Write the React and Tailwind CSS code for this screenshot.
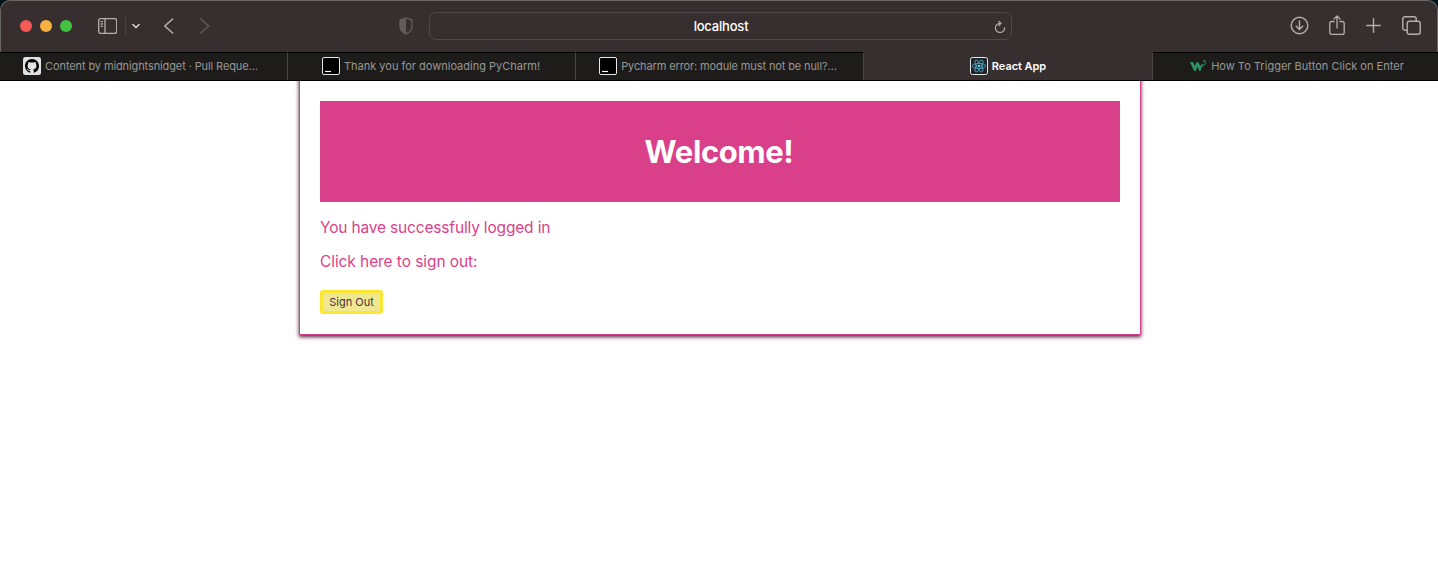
import React from "react";

function GithubIcon() {
  return (
    <svg className="size-[18px] shrink-0" viewBox="0 0 18 18">
      <rect width="18" height="18" rx="2.5" fill="#e2e2e2" />
      <g transform="translate(2 2) scale(0.875)">
        <path
          fill="#000"
          fillRule="evenodd"
          d="M8 0C3.58 0 0 3.58 0 8c0 3.54 2.29 6.53 5.47 7.59.4.07.55-.17.55-.38 0-.19-.01-.82-.01-1.49-2.01.37-2.53-.49-2.69-.94-.09-.23-.48-.94-.82-1.13-.28-.15-.68-.52-.01-.53.63-.01 1.08.58 1.23.82.72 1.21 1.87.87 2.33.66.07-.52.28-.87.51-1.07-1.78-.2-3.64-.89-3.64-3.95 0-.87.31-1.59.82-2.15-.08-.2-.36-1.02.08-2.12 0 0 .67-.21 2.2.82.64-.18 1.32-.27 2-.27s1.36.09 2 .27c1.53-1.04 2.2-.82 2.2-.82.44 1.1.16 1.92.08 2.12.51.56.82 1.27.82 2.15 0 3.07-1.87 3.75-3.65 3.95.29.25.54.73.54 1.48 0 1.07-.01 1.93-.01 2.2 0 .21.15.46.55.38A8.01 8.01 0 0 0 16 8c0-4.42-3.58-8-8-8z"
        />
      </g>
    </svg>
  );
}

function JetBrainsIcon() {
  return (
    <svg className="size-[18px] shrink-0" viewBox="0 0 18 18">
      <rect x="0.5" y="0.5" width="17" height="17" rx="1.5" fill="#000" stroke="#e8e8e8" />
      <path d="M3 14.5h6" stroke="#fff" strokeWidth="1.2" />
    </svg>
  );
}

function ReactIcon() {
  return (
    <svg className="size-[18px] shrink-0" viewBox="0 0 18 18">
      <rect x="0.5" y="0.5" width="17" height="17" rx="2" fill="#20232a" stroke="#e8e8e8" />
      <g fill="none" stroke="#4fa9c4" strokeWidth="0.85">
        <ellipse cx="9" cy="9" rx="6.7" ry="2.6" />
        <ellipse cx="9" cy="9" rx="6.7" ry="2.6" transform="rotate(60 9 9)" />
        <ellipse cx="9" cy="9" rx="6.7" ry="2.6" transform="rotate(120 9 9)" />
      </g>
      <circle cx="9" cy="9" r="1.3" fill="#61dafb" />
    </svg>
  );
}

function W3Icon() {
  return (
    <svg className="h-[18px] w-[17px] shrink-0" viewBox="0 0 17 18">
      <path
        fill="#2c9469"
        d="M0 5h3l1.900 4.300L6.600 5.300h1.800l1.900 4 .9-1.700c.6-.7 1.600-.3 2.100.6l.3 1.800c-.7-.8-1.500-.9-1.900 0L10.500 14H9.300L7.500 9.600 5.600 14H4.200z"
      />
      <path
        d="M13 3.700h2.400l-1.100 1.500c1.700 0 1.600 2.400 0 2.400-.7 0-1-.2-1.200-.7"
        fill="none"
        stroke="#2c9469"
        strokeWidth="0.9"
      />
    </svg>
  );
}

const tabs = [
  { label: "Content by midnightsnidget · Pull Reque…", Icon: GithubIcon, spacing: "tracking-[-0.11px]", box: "w-[288px] pr-1.5" },
  { label: "Thank you for downloading PyCharm!", Icon: JetBrainsIcon, spacing: "tracking-[0px]", box: "w-[288px] pr-px" },
  { label: "Pycharm error: module must not be null?…", Icon: JetBrainsIcon, spacing: "tracking-[-0.12px]", box: "w-[288px] pr-[3px]" },
  { label: "React App", Icon: ReactIcon, active: true, spacing: "tracking-[-0.05px]", box: "w-[289px]" },
  { label: "How To Trigger Button Click on Enter", Icon: W3Icon, spacing: "tracking-[0.02px]", box: "w-[285px] pl-[3px]" },
];

function Tab({ label, Icon, active, spacing, box }) {
  return (
    <div
      className={`${box} flex shrink-0 items-center justify-center gap-1 border-t pb-px text-[11px] whitespace-nowrap ${
        active
          ? "border-t-[#372f2f] bg-[#372f2f] font-semibold text-white"
          : "border-t-black bg-[#1d1c1a] text-[#999795]"
      }`}
    >
      <Icon />
      <span className={spacing}>{label}</span>
    </div>
  );
}

function Toolbar() {
  return (
    <div className="flex h-[52px] items-center rounded-t-[10px] border-x border-t border-[#6b6666] bg-[#372f2f] pb-px pl-[19px] text-[#b4afaf]">
      <div className="flex gap-2">
        <span className="size-3 rounded-full bg-[#f35b57]" />
        <span className="size-3 rounded-full bg-[#f6b23e]" />
        <span className="size-3 rounded-full bg-[#44c143]" />
      </div>
      <svg className="ml-[26px] h-4 w-[19px]" viewBox="0 0 19 16" fill="none" stroke="currentColor" strokeWidth="1.3">
        <rect x="0.7" y="0.7" width="18" height="14.6" rx="2" />
        <path d="M7 .7v14.6M2.7 3.7h2.2M2.7 6h2.2M2.7 8.3h2.2" />
      </svg>
      <span className="ml-2 h-[18px] w-px bg-[#4b4343]" />
      <svg className="ml-1.5 h-2 w-2" viewBox="0 0 8 8" fill="none" stroke="#d5d2d2" strokeWidth="1.6" strokeLinecap="round" strokeLinejoin="round">
        <path d="M.9 2.5 4 5.5 7.1 2.5" />
      </svg>
      <svg className="ml-6 h-4 w-[10px]" viewBox="0 0 10 16" fill="none" stroke="currentColor" strokeWidth="1.6" strokeLinecap="round" strokeLinejoin="round">
        <path d="M8.600 1 .8 8l7.800 7" />
      </svg>
      <svg className="ml-[26px] h-4 w-[10px]" viewBox="0 0 10 16" fill="none" stroke="#605959" strokeWidth="1.6" strokeLinecap="round" strokeLinejoin="round">
        <path d="m.8 1 7.800 7-7.800 7" />
      </svg>
      <svg className="mb-px ml-[189px] h-[18px] w-[14px]" viewBox="0 0 14 18" fill="#625b5b">
        <path d="M7 .8 13 3v7c0 3.5-3 5.5-6 7-3-1.5-6-3.500-6-7V3z" fill="none" stroke="#625b5b" strokeWidth="1.4" strokeLinejoin="round" />
        <path d="M7 .8 1 3v7c0 3.500 3 5.500 6 7z" />
      </svg>
      <div className="ml-4 flex h-7 w-[583px] items-center rounded-[7px] border border-[#504949] pr-[5px]">
        <span className="flex-1 pt-px pl-[18px] text-center text-[13px] font-medium tracking-[-0.2px] text-white">localhost</span>
        <svg className="mt-0.5 h-3 w-3" viewBox="0 0 12 12" fill="none" stroke="currentColor" strokeWidth="1.2" strokeLinecap="round" strokeLinejoin="round">
          <path d="M6 2.3A4.600 4.600 0 1 0 10.600 6.800M4.900 .5 7 2.400 4.900 4.500" />
        </svg>
      </div>
      <svg className="mb-0.5 ml-[278px] size-[19px]" viewBox="0 0 19 19" fill="none" stroke="currentColor" strokeWidth="1.4" strokeLinecap="round" strokeLinejoin="round">
        <circle cx="9.500" cy="9.500" r="8.300" />
        <path d="M9.500 5v8.300M6.300 10.200l3.200 3.200 3.200-3.200" />
      </svg>
      <svg className="mb-0.5 ml-5 h-5 w-4" viewBox="0 0 16 20" fill="none" stroke="currentColor" strokeWidth="1.3" strokeLinecap="round" strokeLinejoin="round">
        <path d="M5 6.500H2.700A1.900 1.900 0 0 0 .8 8.400v9A1.900 1.900 0 0 0 2.700 19.300h10.600a1.900 1.900 0 0 0 1.900-1.900v-9a1.900 1.900 0 0 0-1.900-1.900H11M8 13V1M5 4l3-3 3 3" />
      </svg>
      <svg className="mb-0.5 ml-[21px] size-[15px]" viewBox="0 0 15 15" fill="none" stroke="currentColor" strokeWidth="1.4" strokeLinecap="round">
        <path d="M7.500 .8v13.400M.8 7.500h13.400" />
      </svg>
      <svg className="mb-0.5 ml-[21px] size-[19px]" viewBox="0 0 19 19" fill="none" stroke="currentColor" strokeWidth="1.4" strokeLinejoin="round">
        <rect x="5.200" y="5.200" width="13" height="13" rx="2" />
        <path d="M5.200 14.200H2.800a2 2 0 0 1-2-2V2.800a2 2 0 0 1 2-2h9.400a2 2 0 0 1 2 2v2.400" />
      </svg>
    </div>
  );
}

export default function App() {
  return (
    <div className="flex h-[586px] w-[1438px] flex-col overflow-hidden bg-white font-['Inter',sans-serif]">
      <header className="shrink-0 bg-[#03131c]">
        <Toolbar />
        <nav className="flex h-[29px] divide-x divide-[#4b4545] border-b border-black bg-[#372f2f]">
          {tabs.map((tab) => (
            <Tab key={tab.label} {...tab} />
          ))}
        </nav>
      </header>
      <main className="flex flex-1 items-start justify-center overflow-hidden pl-[2px]">
        <section className="-mt-5 h-[274px] w-[842px] border border-[#da3f8a] px-5 pt-[39px] text-[#da3f8a] shadow-[0_2px_4px_#501c3a]">
          <h1 className="flex h-[101px] items-center justify-center bg-[#da3f8a] pt-px pr-0.5 text-[31px] font-bold tracking-[-0.4px] text-white">
            Welcome!
          </h1>
          <p className="mt-[14px] text-[15.5px] leading-6 tracking-[-0.17px]">You have successfully logged in</p>
          <p className="mt-2.5 text-[15.5px] leading-6 tracking-[-0.08px]">Click here to sign out:</p>
          <button className="mt-4 flex h-6 w-[63px] items-center justify-center rounded-[3px] border-3 border-[#fbe733] bg-[#f0e891] text-[11px] whitespace-nowrap text-[#4a3142]">
            Sign Out
          </button>
        </section>
      </main>
    </div>
  );
}
